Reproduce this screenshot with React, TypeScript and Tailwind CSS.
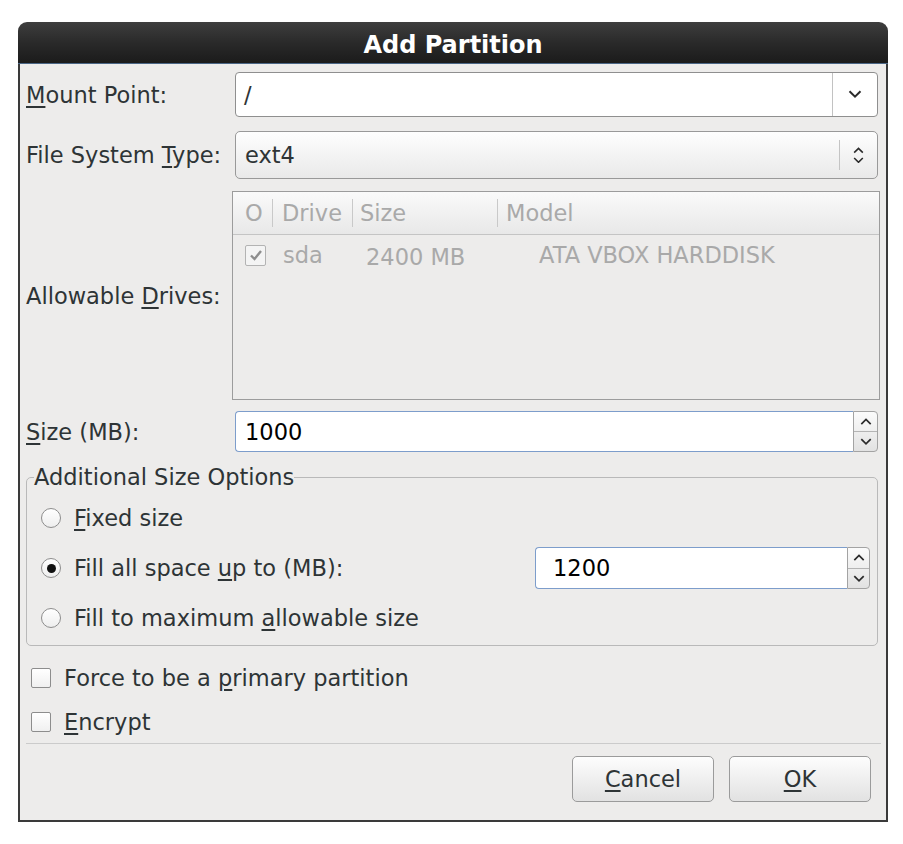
import { FC, ReactNode } from 'react';

const U: FC<{ children: ReactNode }> = ({ children }) => (
  <span className="underline decoration-2 underline-offset-[3px]">{children}</span>
);

const ChevronDown: FC<{ w?: number }> = ({ w = 14 }) => (
  <svg width={w} height={w * 0.6} viewBox="0 0 14 8.4">
    <path d="M1.5 1.2 L7 6.7 L12.5 1.2" stroke="#2a2a2a" strokeWidth="2" fill="none" />
  </svg>
);

const ChevronUp: FC<{ w?: number }> = ({ w = 14 }) => (
  <svg width={w} height={w * 0.6} viewBox="0 0 14 8.4">
    <path d="M1.5 7.2 L7 1.7 L12.5 7.2" stroke="#2a2a2a" strokeWidth="2" fill="none" />
  </svg>
);

const SpinBox: FC<{ value: string; buttonWidth: string; padText: string }> = ({ value, buttonWidth, padText }) => (
  <div className="flex h-full w-full">
    <div className={`flex flex-1 items-center rounded-l-[4px] border border-r-0 border-[#7d9dcb] bg-white text-black ${padText}`}>
      {value}
    </div>
    <div className={`flex ${buttonWidth} flex-col rounded-r-[4px] border border-[#a3a3a3] bg-gradient-to-b from-[#fbfbfb] to-[#e2e2e2]`}>
      <div className="flex flex-1 items-center justify-center border-b border-[#b4b4b4]">
        <ChevronUp w={12} />
      </div>
      <div className="flex flex-1 items-center justify-center">
        <ChevronDown w={12} />
      </div>
    </div>
  </div>
);

const Radio: FC<{ checked?: boolean }> = ({ checked }) => (
  <span className="flex h-[20px] w-[20px] items-center justify-center rounded-full border border-[#8d8d8d] bg-gradient-to-b from-white to-[#eeeeee]">
    {checked && <span className="h-[9px] w-[9px] rounded-full bg-[#111]" />}
  </span>
);

const Checkbox: FC = () => (
  <span className="h-[20px] w-[20px] rounded-[2px] border border-[#8d8d8d] bg-gradient-to-b from-white to-[#f0f0f0]" />
);

const Button: FC<{ children: ReactNode }> = ({ children }) => (
  <button className="flex h-[46px] w-[142px] items-center justify-center rounded-[5px] border border-[#9b9b9b] bg-gradient-to-b from-[#fdfdfd] to-[#e2e2e2] text-[#2e3436]">
    {children}
  </button>
);

// short vertical divider used in the drive list header
const HeadSep: FC = () => <span className="h-[28px] w-px bg-[#c9c9c9]" />;

export default function App() {
  return (
    <div className="min-h-[844px] bg-white pl-[18px] pt-[22px] font-['DejaVu_Sans',sans-serif] text-[22.5px] leading-[26px] text-[#2e3436]">
      <div className="w-[870px]">
        {/* Title bar */}
        <div className="flex h-[42px] items-center justify-center rounded-t-[9px] border-b border-[#4a6686] bg-gradient-to-b from-[#3e3e3e] via-[#2a2a2a] to-[#1b1b1b] pt-[4px]">
          <span className="text-[24px] font-bold text-white">Add Partition</span>
        </div>

        <div className="border-x-2 border-b-2 border-[#3a3a3a] bg-[#edeceb] pl-[6px] pr-[8px] pt-[8px] pb-[18px]">
          {/* Mount point */}
          <div className="grid h-[45px] grid-cols-[209px_1fr] items-center">
            <span>
              <U>M</U>ount Point:
            </span>
            <div className="flex h-full rounded-[4px] border border-[#8f8f8f] bg-white">
              <div className="flex flex-1 items-center pl-[8px]">/</div>
              <div className="flex w-[45px] items-center justify-center border-l border-[#c2c2c2]">
                <ChevronDown />
              </div>
            </div>
          </div>

          {/* File system type */}
          <div className="mt-[14px] grid h-[48px] grid-cols-[209px_1fr] items-center">
            <span>
              File System <U>T</U>ype:
            </span>
            <div className="flex h-full rounded-[5px] border border-[#999] bg-gradient-to-b from-[#fefefe] to-[#e9e9e9]">
              <div className="flex flex-1 items-center pl-[9px]">ext4</div>
              <div className="my-[8px] flex w-[38px] flex-col items-center justify-center gap-[3px] border-l border-[#c4c4c4]">
                <ChevronUp w={11} />
                <ChevronDown w={11} />
              </div>
            </div>
          </div>

          {/* Allowable drives */}
          <div className="mt-[12px] grid h-[209px] grid-cols-[209px_1fr] items-center">
            <span>
              Allowable <U>D</U>rives:
            </span>
            <div className="-ml-[3px] -mr-[2px] flex h-full flex-col border border-[#9c9c9c] bg-[#edeceb] text-[#a9a9a9]">
              <div className="flex h-[43px] items-center border-b border-[#c4c4c4] bg-gradient-to-b from-[#fafafa] to-[#e8e8e8]">
                <div className="flex w-[40px] items-center justify-between pl-[12px]">
                  <span>O</span>
                  <HeadSep />
                </div>
                <div className="flex w-[80px] items-center justify-between pl-[9px]">
                  <span>Drive</span>
                  <HeadSep />
                </div>
                <div className="flex w-[145px] items-center justify-between pl-[7px]">
                  <span>Size</span>
                  <HeadSep />
                </div>
                <div className="pl-[8px]">Model</div>
              </div>
              <div className="flex h-[40px] items-center">
                <div className="flex w-[40px] pl-[12px]">
                  <span className="flex h-[21px] w-[21px] items-center justify-center rounded-[2px] border border-[#b3b3b3] bg-[#f4f4f4]">
                    <svg width="14" height="12" viewBox="0 0 14 12">
                      <path d="M2 6.5 L5.5 10 L12 2" stroke="#8e8e8e" strokeWidth="2.4" fill="none" />
                    </svg>
                  </span>
                </div>
                <div className="w-[80px] pl-[10px]">sda</div>
                <div className="w-[186px] pl-[13px] pt-[4px]">2400 MB</div>
                <div>ATA VBOX HARDDISK</div>
              </div>
            </div>
          </div>

          {/* Size */}
          <div className="mt-[11px] grid h-[41px] grid-cols-[209px_1fr] items-center">
            <span>
              <U>S</U>ize (MB):
            </span>
            <SpinBox value="1000" buttonWidth="w-[25px]" padText="pl-[9px]" />
          </div>

          {/* Additional size options */}
          <fieldset className="mt-[12px] rounded-[5px] border border-[#b9b9b9] pt-[3px] pb-[2px] pl-[14px] pr-[7px]">
            <legend className="-ml-[7px] leading-[26px]">Additional Size Options</legend>
            <div className="flex h-[50px] items-center gap-[13px]">
              <Radio />
              <span>
                <U>F</U>ixed size
              </span>
            </div>
            <div className="flex h-[50px] items-center gap-[13px]">
              <Radio checked />
              <span>
                Fill all space <U>u</U>p to (MB):
              </span>
              <div className="ml-auto h-[42px] w-[335px]">
                <SpinBox value="1200" buttonWidth="w-[23px]" padText="pl-[17px]" />
              </div>
            </div>
            <div className="flex h-[50px] items-center gap-[13px]">
              <Radio />
              <span>
                Fill to maximum <U>a</U>llowable size
              </span>
            </div>
          </fieldset>

          {/* Checkboxes */}
          <div className="mt-[9px] flex h-[45px] items-center gap-[13px] pl-[5px]">
            <Checkbox />
            <span>
              Force to be a <U>p</U>rimary partition
            </span>
          </div>
          <div className="flex h-[43px] items-center gap-[13px] pl-[5px]">
            <Checkbox />
            <span>
              <U>E</U>ncrypt
            </span>
          </div>

          <div className="-mr-[3px] h-px bg-[#cbcbcb]" />

          {/* Buttons */}
          <div className="mt-[12px] flex justify-end gap-[15px] pr-[7px]">
            <Button>
              <U>C</U>ancel
            </Button>
            <Button>
              <U>O</U>K
            </Button>
          </div>
        </div>
      </div>
    </div>
  );
}
